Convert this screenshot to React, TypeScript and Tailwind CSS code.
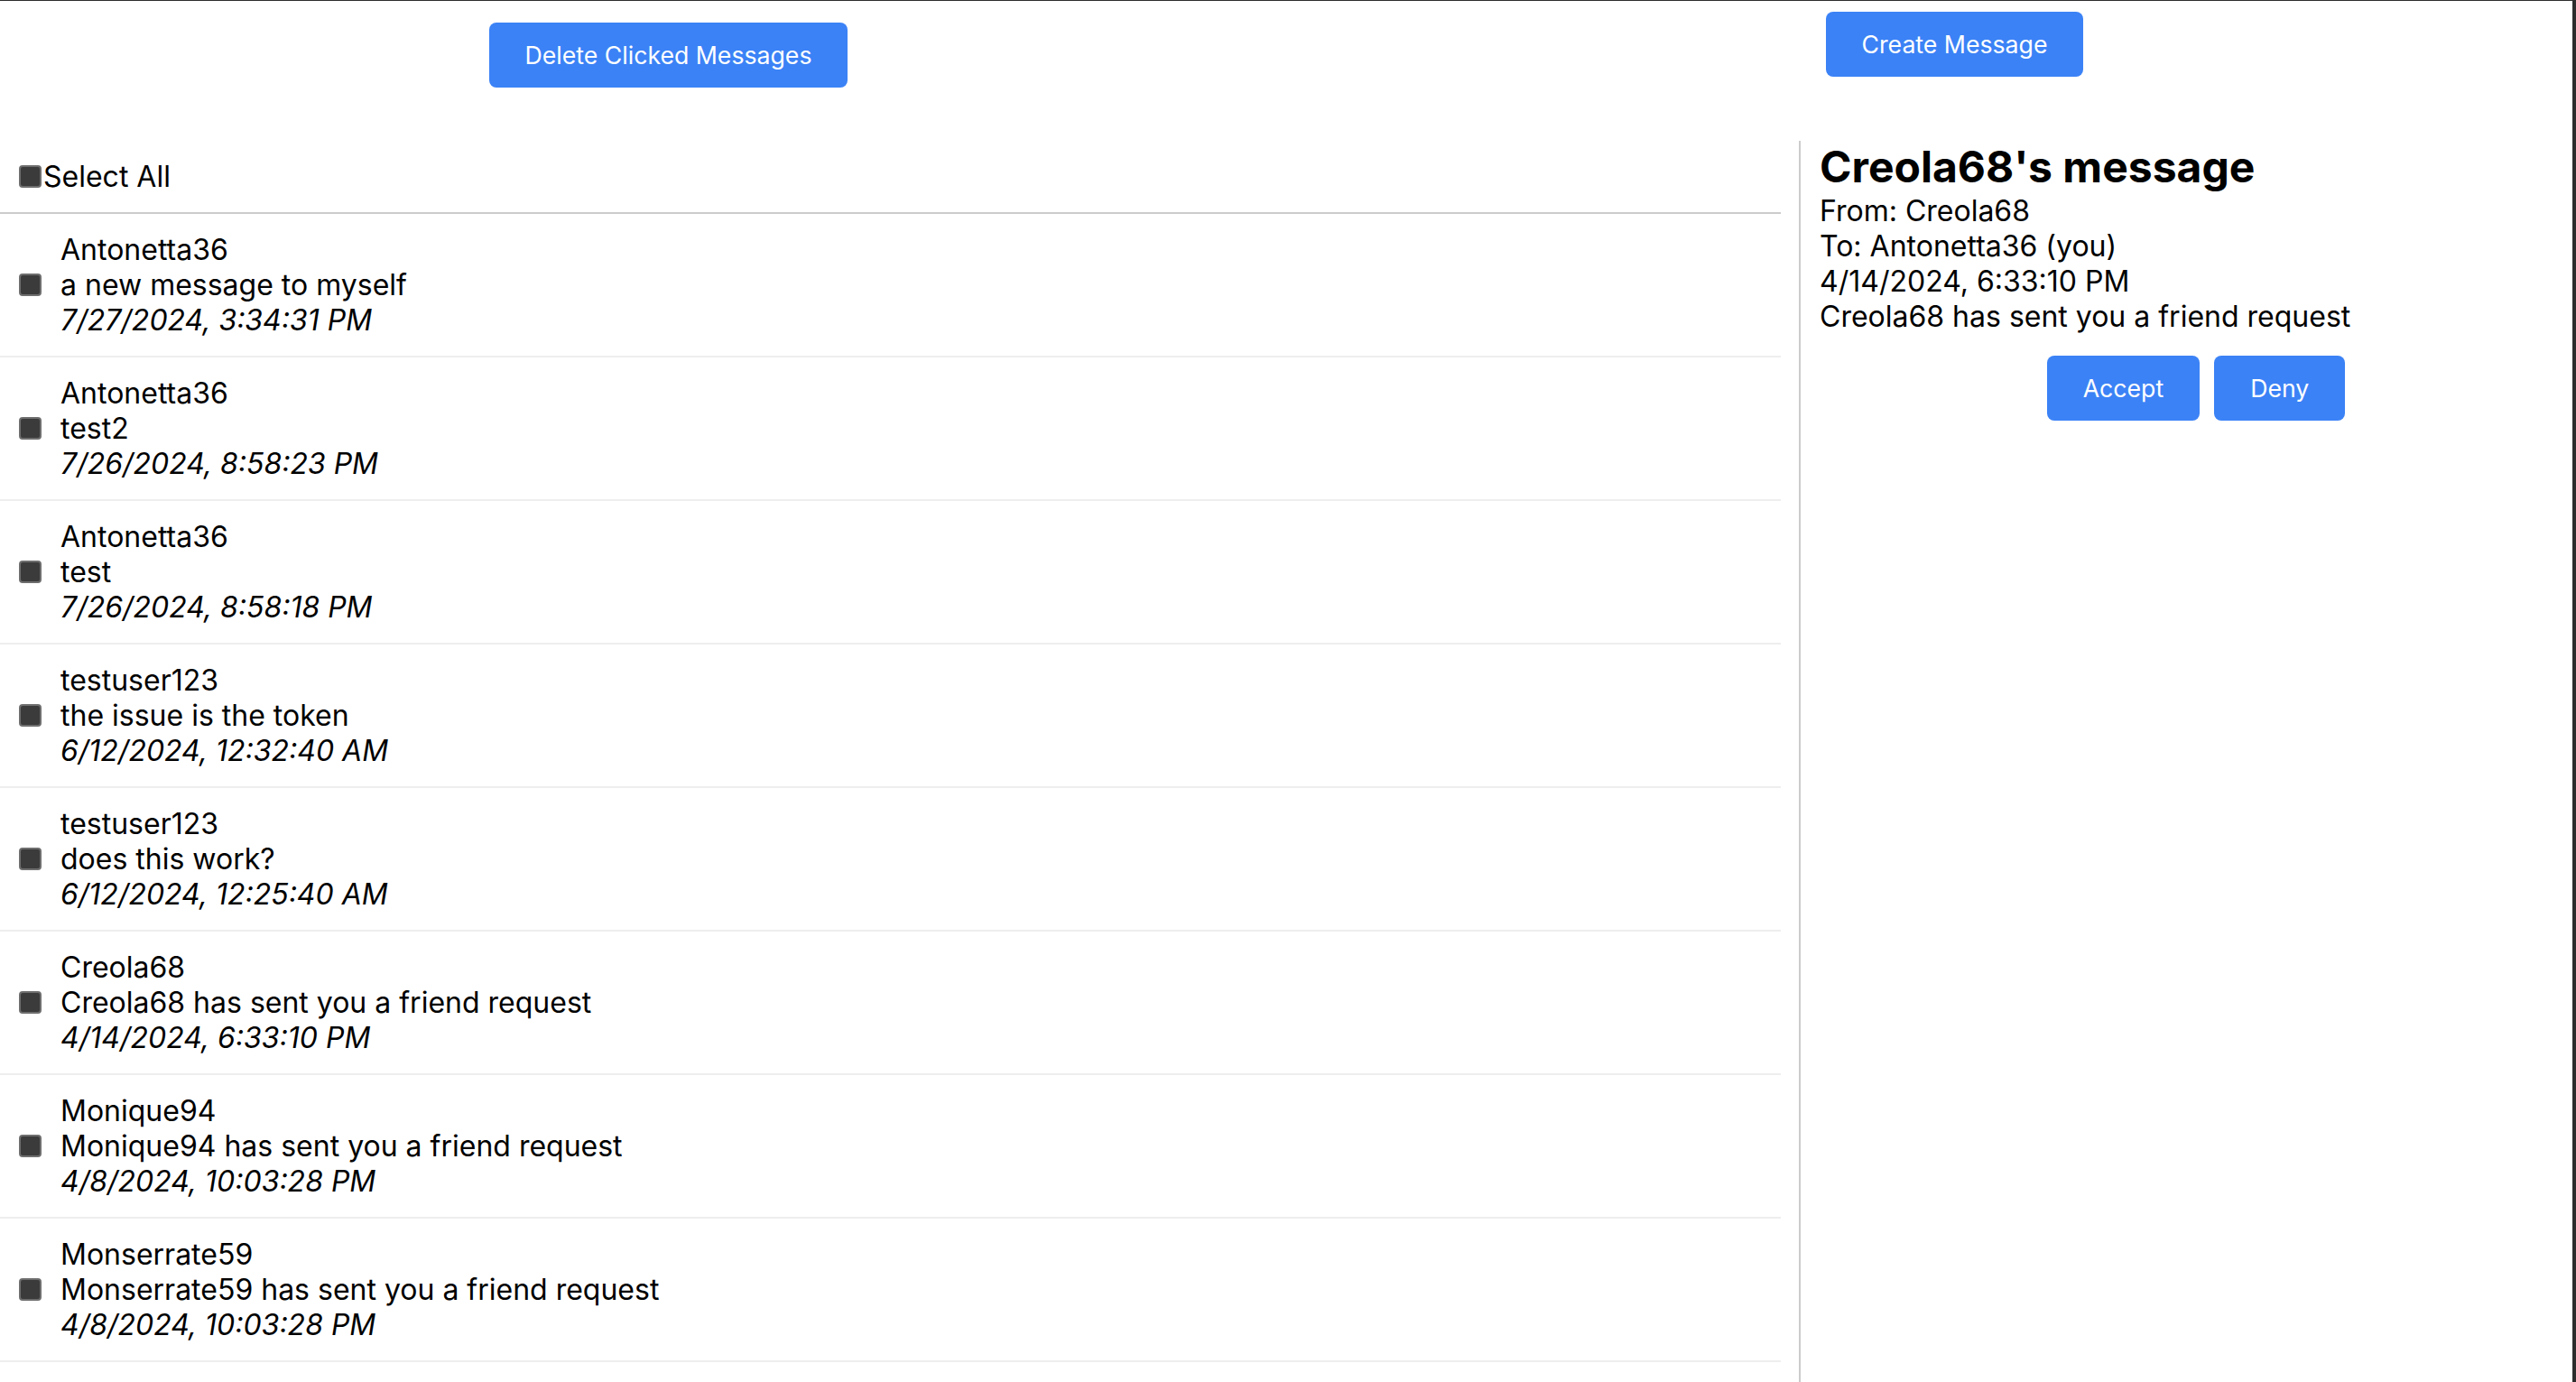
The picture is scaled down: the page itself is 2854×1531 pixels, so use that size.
import React from 'react';

type Message = {
  id: number;
  sender: string;
  text: string;
  date: string;
};

const messages: Message[] = [
  { id: 1, sender: 'Antonetta36', text: 'a new message to myself', date: '7/27/2024, 3:34:31 PM' },
  { id: 2, sender: 'Antonetta36', text: 'test2', date: '7/26/2024, 8:58:23 PM' },
  { id: 3, sender: 'Antonetta36', text: 'test', date: '7/26/2024, 8:58:18 PM' },
  { id: 4, sender: 'testuser123', text: 'the issue is the token', date: '6/12/2024, 12:32:40 AM' },
  { id: 5, sender: 'testuser123', text: 'does this work?', date: '6/12/2024, 12:25:40 AM' },
  { id: 6, sender: 'Creola68', text: 'Creola68 has sent you a friend request', date: '4/14/2024, 6:33:10 PM' },
  { id: 7, sender: 'Monique94', text: 'Monique94 has sent you a friend request', date: '4/8/2024, 10:03:28 PM' },
  { id: 8, sender: 'Monserrate59', text: 'Monserrate59 has sent you a friend request', date: '4/8/2024, 10:03:28 PM' },
];

const Checkbox: React.FC = () => (
  <input
    type="checkbox"
    className="appearance-none shrink-0 w-[25px] h-[25px] rounded-[4px] bg-[#3b3b3b] border-2 border-[#6e6e6e]"
  />
);

const btn = 'bg-[#3b82f6] text-white text-[26.67px] leading-[40px] px-10 py-4 rounded-[8px]';

const App: React.FC = () => {
  return (
    <div className="h-screen overflow-hidden bg-white text-black border-t border-r-4 border-[#2d2d2d] font-['Inter','Noto_Sans',sans-serif] text-[32px] leading-[39px]">
      <div className="h-[155px] flex justify-around items-start">
        <button className={`${btn} mt-[24px]`}>Delete Clicked Messages</button>
        <button className={`${btn} mt-[12px]`}>Create Message</button>
      </div>

      <div className="flex h-full">
        <div className="w-[1973px] shrink-0">
          <div className="flex items-center pl-[21px] py-5 border-b-2 border-[#cccccc]">
            <Checkbox />
            <span className="ml-[2px]">Select All</span>
          </div>
          <ul>
            {messages.map((m) => (
              <li key={m.id} className="flex items-center pl-[21px] py-5 border-b-2 border-[#eeeeee]">
                <Checkbox />
                <div className="ml-[21px]">
                  <div>{m.sender}</div>
                  <div>{m.text}</div>
                  <div className="italic">{m.date}</div>
                </div>
              </li>
            ))}
          </ul>
        </div>

        <div className="flex-1 ml-[20px] border-l-2 border-[#cccccc] pl-[21px]">
          <h2 className="text-[48px] leading-[58px] font-bold">Creola68's message</h2>
          <div>From: Creola68</div>
          <div>To: Antonetta36 (you)</div>
          <div>4/14/2024, 6:33:10 PM</div>
          <div>Creola68 has sent you a friend request</div>
          <div className="flex justify-center mt-[24px]">
            <button className={`${btn} mx-2`}>Accept</button>
            <button className={`${btn} mx-2`}>Deny</button>
          </div>
        </div>
      </div>
    </div>
  );
};

export default App;
